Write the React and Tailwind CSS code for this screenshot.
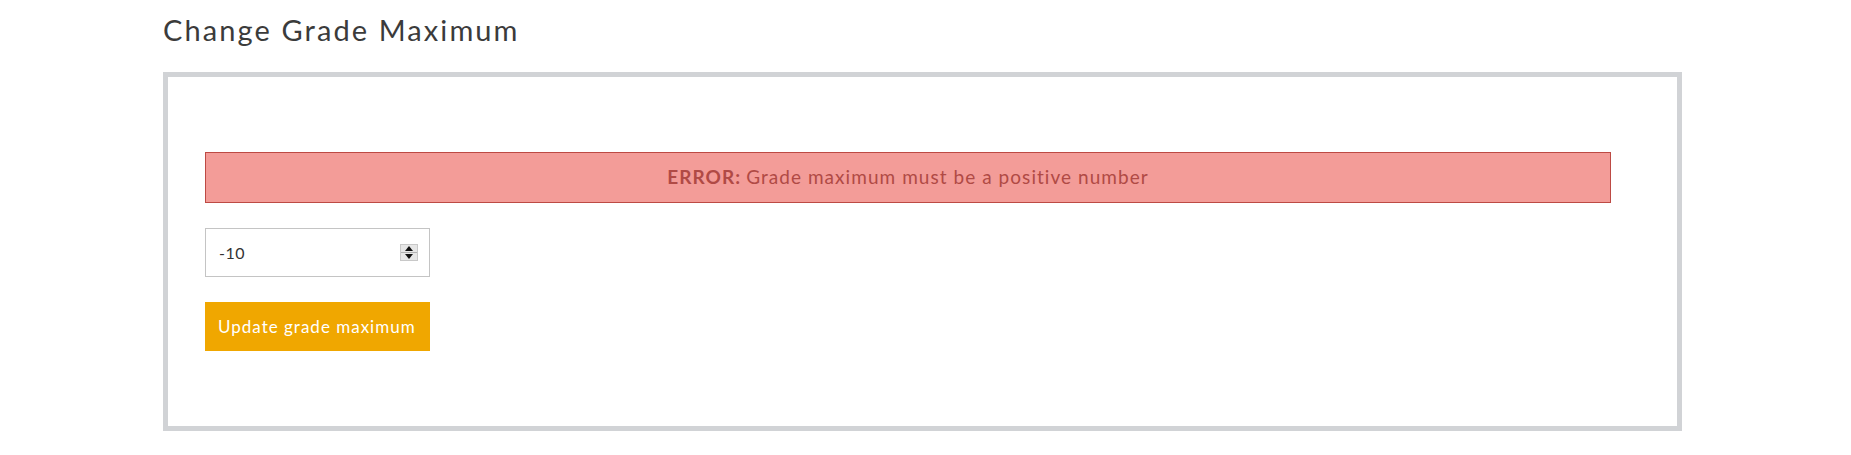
import React, { useState } from 'react';

const font = { fontFamily: 'Lato, "Open Sans", sans-serif' };

const Spinner = () => (
  <div className="flex flex-col w-[18px] h-[17px] border border-[#c8c8c8] bg-[#e6e6e6]">
    <div className="flex-1 flex items-center justify-center border-b border-[#b0b0b0]">
      <svg width="8" height="5" viewBox="0 0 8 5"><path d="M0 5 L4 0 L8 5 Z" fill="#111" /></svg>
    </div>
    <div className="flex-1 flex items-center justify-center">
      <svg width="8" height="5" viewBox="0 0 8 5"><path d="M0 0 L4 5 L8 0 Z" fill="#111" /></svg>
    </div>
  </div>
);

const App = () => {
  const [max, setMax] = useState('-10');

  return (
    <div className="min-h-[455px] bg-white" style={font}>
      <div className="ml-[163px] w-[1519px]">
        <h1 className="pt-[12px] text-[29px] leading-[36px] text-[#3b3b3b] font-normal tracking-[2.1px]">
          Change Grade Maximum
        </h1>

        {/* Settings panel */}
        <div className="mt-[24px] border-[5px] border-[#d1d3d6] pt-[75px] pb-[75px] pl-[37px] pr-[66px]">
          <div className="h-[51px] flex items-center justify-center border border-[#bd4a44] bg-[#f39c98] text-[#b04a45] text-[19px] tracking-[1.05px]">
            <span className="font-bold">ERROR:</span>
            <span className="ml-[5px]">Grade maximum must be a positive number</span>
          </div>

          <div className="mt-[25px] w-[225px] h-[49px] border border-[#c4c4c4] flex items-center pl-[13px] pr-[11px]">
            <input
              type="text"
              value={max}
              onChange={(e) => setMax(e.target.value)}
              className="flex-1 min-w-0 outline-none text-[16px] text-[#333] tracking-[0.5px]"
              style={font}
            />
            <Spinner />
          </div>

          <button
            type="button"
            className="mt-[25px] w-[225px] h-[49px] bg-[#f0a700] text-white text-[17px] tracking-[1px] flex items-center pl-[13px]"
            style={font}
          >
            Update grade maximum
          </button>
        </div>
      </div>
    </div>
  );
};

export default App;
